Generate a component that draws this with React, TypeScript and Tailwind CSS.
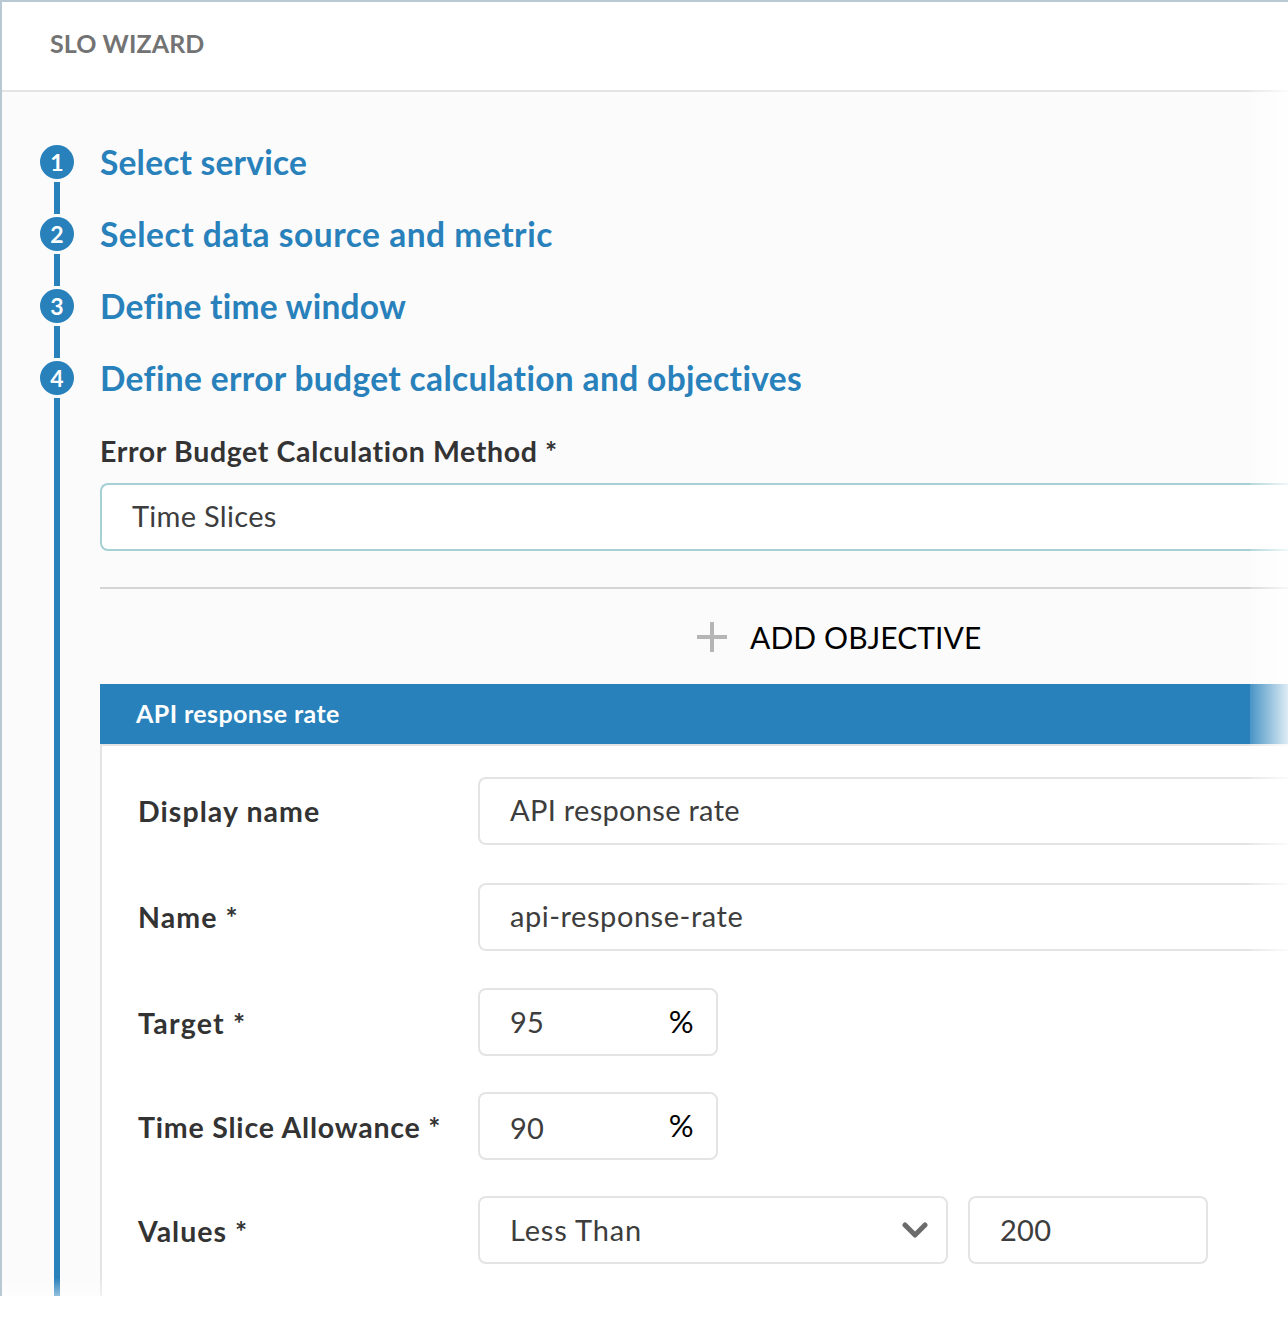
const font = { fontFamily: '"Lato", "Noto Sans", sans-serif' };

function Step({ n, title, spacing }: { n: number; title: string; spacing: string }) {
  return (
    <div className="flex h-[72px]">
      <div className="flex w-[34px] flex-col items-center">
        <div className="flex h-[34px] w-[34px] items-center justify-center rounded-full bg-[#2881bb] text-[23px] font-bold text-white">
          {n}
        </div>
        <div className="mt-[3px] h-[32px] w-[6px] bg-[#2881bb]" />
      </div>
      <h2 className={`ml-[26px] h-[34px] text-[33.5px] leading-[34px] font-bold text-[#2881bb] ${spacing}`}>{title}</h2>
    </div>
  );
}

function Field({ children, className = "" }: { children: React.ReactNode; className?: string }) {
  return (
    <div className={`flex h-[68px] items-center rounded-lg border-2 border-[#e4e4e4] bg-white pb-[2px] pl-[30px] text-[29px] tracking-[0.3px] text-[#3d3d3d] ${className}`}>
      {children}
    </div>
  );
}

function Row({ label, className, labelClass, children }: { label: string; className: string; labelClass: string; children: React.ReactNode }) {
  return (
    <div className={`flex items-center ${className}`}>
      <label className={`w-[340px] text-[28.5px] font-bold text-[#333333] ${labelClass}`}>{label}</label>
      {children}
    </div>
  );
}

export default function App() {
  return (
    <div className="h-[1318px] w-[1288px] overflow-hidden bg-white" style={font}>
      <div className="relative flex h-[1296px] flex-col overflow-hidden border-t-2 border-l-2 border-[#b8c9d4] bg-[#fbfbfb]">
        <header className="flex h-[90px] shrink-0 items-center border-b-2 border-[#e4e4e4] bg-white pb-[4px] pl-[48px] text-[25px] font-bold tracking-[0.1px] text-[#737373]">
          SLO WIZARD
        </header>

        <div className="flex flex-1 flex-col pt-[53px] pl-[38px]">
          <Step n={1} title="Select service" spacing="tracking-[0.2px]" />
          <Step n={2} title="Select data source and metric" spacing="tracking-[0.52px]" />
          <Step n={3} title="Define time window" spacing="tracking-[0.24px]" />

          <div className="flex flex-1">
            <div className="flex w-[34px] flex-col items-center">
              <div className="flex h-[34px] w-[34px] shrink-0 items-center justify-center rounded-full bg-[#2881bb] text-[23px] font-bold text-white">
                4
              </div>
              <div className="mt-[3px] w-[6px] flex-1 bg-[#2881bb]" />
            </div>

            <div className="ml-[26px] flex flex-1 flex-col">
              <h2 className="h-[34px] text-[33.5px] leading-[34px] font-bold tracking-[0.35px] text-[#2881bb]">
                Define error budget calculation and objectives
              </h2>
              <label className="mt-[38px] h-[36px] text-[28.5px] leading-[36px] font-bold tracking-[0.63px] text-[#333333]">
                Error Budget Calculation Method *
              </label>
              <div className="mt-[14px] flex h-[68px] items-center rounded-l-lg border-2 border-r-0 border-[#a5d0d6] bg-white pb-[2px] pl-[30px] text-[29px] tracking-[0.3px] text-[#3d3d3d]">
                Time Slices
              </div>
              <div className="mt-[36px] h-[2px] bg-[#d4d4d4]" />

              <button className="flex h-[95px] items-center pl-[596px] text-[30px] tracking-[0.1px] text-black">
                <svg width="32" height="32" viewBox="0 0 32 32" className="mr-[22px]">
                  <path d="M16 1v30M1 16h30" stroke="#b5b5b5" strokeWidth="4" fill="none" />
                </svg>
                <span className="pt-[2px]">ADD OBJECTIVE</span>
              </button>

              <div className="flex h-[60px] shrink-0 items-center bg-[#2881bb] pl-[36px] text-[25px] font-bold tracking-[0.4px] text-white">
                API response rate
              </div>

              <div className="flex-1 border-t-2 border-l-2 border-[#e4e4e4] bg-white pt-[31px] pl-[36px]">
                <Row label="Display name" className="" labelClass="tracking-[1.08px]">
                  <Field className="flex-1 rounded-r-none border-r-0">API response rate</Field>
                </Row>
                <Row label="Name *" className="mt-[38px]" labelClass="tracking-[1.1px]">
                  <Field className="flex-1 rounded-r-none border-r-0 tracking-[0.55px]">api-response-rate</Field>
                </Row>
                <Row label="Target *" className="mt-[37px]" labelClass="pt-[3px] tracking-[1.25px]">
                  <Field className="w-[240px] justify-between pr-[22px]">
                    <span className="pt-[2px]">95</span>
                    <span className="text-[31px] text-black">%</span>
                  </Field>
                </Row>
                <Row label="Time Slice Allowance *" className="mt-[36px]" labelClass="pt-[3px] tracking-[0.8px]">
                  <Field className="w-[240px] justify-between pr-[22px]">
                    <span className="pt-[6px]">90</span>
                    <span className="text-[31px] text-black">%</span>
                  </Field>
                </Row>
                <Row label="Values *" className="mt-[36px]" labelClass="pt-[3px] tracking-[1px]">
                  <Field className="w-[470px] justify-between pr-[18px] tracking-[0.85px]">
                    <span className="pt-[2px]">Less Than</span>
                    <svg width="26" height="18" viewBox="0 0 26 18" className="mt-[4px]">
                      <path d="M3 3l10 10L23 3" stroke="#6b6b6b" strokeWidth="5" strokeLinecap="round" strokeLinejoin="round" fill="none" />
                    </svg>
                  </Field>
                  <Field className="ml-[20px] w-[240px]"><span className="pt-[2px]">200</span></Field>
                </Row>
              </div>
            </div>
          </div>
        </div>

        {/* fades over the right and bottom edges */}
        <div className="pointer-events-none absolute inset-y-[-2px] right-0 w-[38px] bg-gradient-to-r from-white/15 to-white/85" />
        <div className="pointer-events-none absolute inset-x-0 bottom-0 h-[18px] bg-gradient-to-b from-transparent to-white/50" />
      </div>
    </div>
  );
}
